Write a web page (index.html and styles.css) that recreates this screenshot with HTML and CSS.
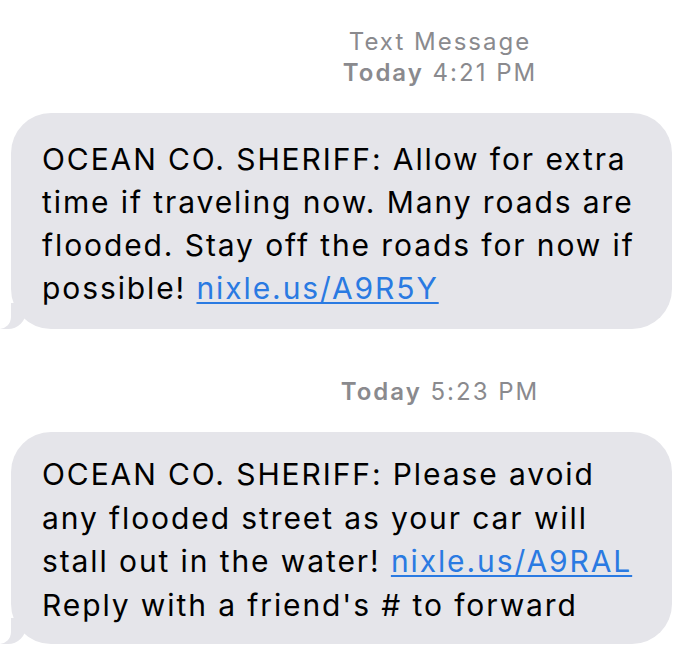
FILE: index.html
```html
<!DOCTYPE html>
<html lang="en">
<head>
    <meta charset="UTF-8">
    <title>Messages</title>
    <link rel="stylesheet" href="styles.css">
</head>
<body>
    <div class="thread">
        <div class="stamp">
            <div>Text Message</div>
            <div><b>Today</b> 4:21 PM</div>
        </div>
        <div class="bubble bubble-first">
            OCEAN CO. SHERIFF: Allow for extra<br>
            time if traveling now. Many roads are<br>
            flooded. Stay off the roads for now if<br>
            possible! <a href="#">nixle.us/A9R5Y</a>
        </div>
        <div class="stamp stamp-second">
            <div><b>Today</b> 5:23 PM</div>
        </div>
        <div class="bubble bubble-second">
            OCEAN CO. SHERIFF: Please avoid<br>
            any flooded street as your car will<br>
            stall out in the water! <a href="#">nixle.us/A9RAL</a><br>
            Reply with a friend's # to forward
        </div>
    </div>
</body>
</html>
```

FILE: styles.css
```css
body {
    margin: 0;
    background: #fff;
    font-family: Inter, "Liberation Sans", Arial, sans-serif;
}
.thread {
    width: 700px;
    padding-top: 26px;
}
.stamp {
    margin-left: 180px;
    text-align: center;
    color: #8a8a8e;
    font-size: 24px;
    line-height: 31px;
    letter-spacing: 2px;
}
.stamp b {
    font-weight: 600;
}
.stamp-second {
    margin-top: 47px;
    margin-bottom: 25px;
}
.bubble {
    position: relative;
    margin-left: 11px;
    width: 661px;
    box-sizing: border-box;
    padding-left: 31px;
    background: #e5e5ea;
    border-radius: 40px;
    color: #000;
    font-size: 30px;
    letter-spacing: 1.9px;
    white-space: nowrap;
}
.bubble-first {
    margin-top: 25px;
    padding-top: 25px;
    padding-bottom: 19px;
    line-height: 43px;
}
.bubble-second {
    padding-top: 21px;
    padding-bottom: 17px;
    line-height: 43.5px;
}
.bubble a {
    color: #2a7ae2;
    text-decoration: underline;
    text-decoration-thickness: 1.5px;
    text-underline-offset: 3px;
}
.bubble::before {
    content: "";
    position: absolute;
    bottom: 0;
    left: -11px;
    width: 26px;
    height: 26px;
    background: #e5e5ea;
    border-bottom-right-radius: 18px;
}
.bubble::after {
    content: "";
    position: absolute;
    bottom: 0;
    left: -20px;
    width: 20px;
    height: 30px;
    background: #fff;
    border-bottom-right-radius: 12px;
}
```
